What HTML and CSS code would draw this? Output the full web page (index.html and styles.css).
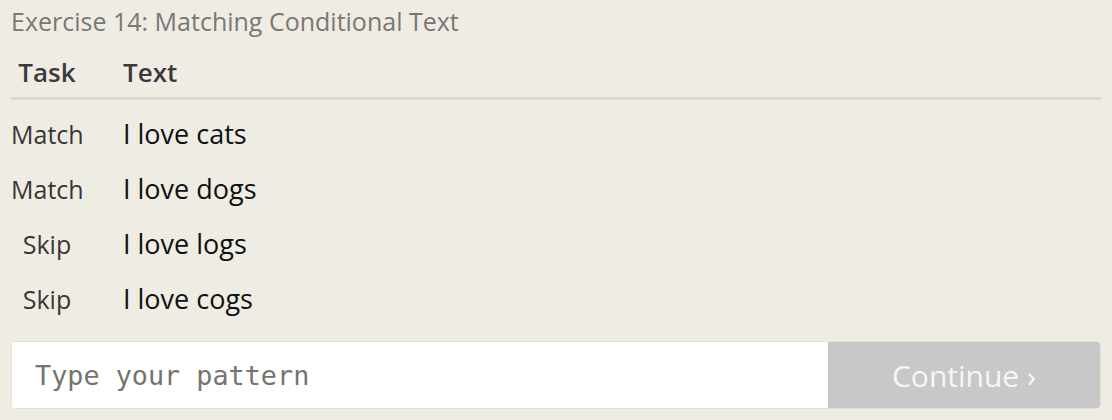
FILE: index.html
```html
<!DOCTYPE html>
<html>
<head>
<meta charset="utf-8">
<link rel="stylesheet" href="styles.css">
</head>
<body>
<div class="page">
  <div class="title">Exercise 14: Matching Conditional Text</div>
  <div class="table">
    <div class="head">
      <div class="th task">Task</div>
      <div class="th">Text</div>
    </div>
    <div class="body">
      <div class="row"><div class="task">Match</div><div class="text">I love cats</div></div>
      <div class="row"><div class="task">Match</div><div class="text">I love dogs</div></div>
      <div class="row"><div class="task">Skip</div><div class="text">I love logs</div></div>
      <div class="row"><div class="task">Skip</div><div class="text">I love cogs</div></div>
    </div>
  </div>
  <div class="entry">
    <input class="pattern" type="text" placeholder="Type your pattern">
    <button class="continue">Continue ›</button>
  </div>
</div>
</body>
</html>
```
FILE: styles.css
```css
html, body {
  margin: 0;
  padding: 0;
  background: #efece4;
}
.page {
  padding: 4px 11px 0 11px;
  font-family: "Open Sans", "Noto Sans", sans-serif;
}
.title {
  font-size: 25px;
  line-height: 34px;
  color: #7a7775;
}
.table {
  margin-top: 8px;
}
.head {
  display: grid;
  grid-template-columns: 72px 1fr;
  column-gap: 40px;
  height: 54px;
  align-items: center;
  border-bottom: 3px solid #dcdad4;
  box-sizing: border-box;
}
.th {
  font-size: 26px;
  font-weight: 600;
  color: #3d3840;
}
.body {
  padding-top: 6px;
}
.row {
  display: grid;
  grid-template-columns: 72px 1fr;
  column-gap: 40px;
  height: 55px;
  align-items: center;
}
.task {
  text-align: center;
  font-size: 25px;
  color: #3a3638;
  white-space: nowrap;
}
.head .task {
  font-size: 26px;
  color: #3d3840;
}
.text {
  font-size: 27px;
  color: #111;
}
.entry {
  display: flex;
  margin-top: 15px;
  height: 68px;
  border: 1px solid #e4e1d9;
  border-radius: 4px;
  overflow: hidden;
  background: #fff;
  box-sizing: border-box;
}
.pattern {
  flex: 1;
  min-width: 0;
  border: none;
  outline: none;
  padding: 0 0 0 23px;
  font-family: "DejaVu Sans Mono", monospace;
  font-size: 26.8px;
  background: #fff;
  color: #333;
}
.pattern::placeholder {
  color: #76736f;
}
.continue {
  width: 272px;
  border: none;
  background: #c8c8c8;
  color: #f6f6f6;
  font-family: "Open Sans", "Noto Sans", sans-serif;
  font-size: 30px;
  padding: 0;
}
```
